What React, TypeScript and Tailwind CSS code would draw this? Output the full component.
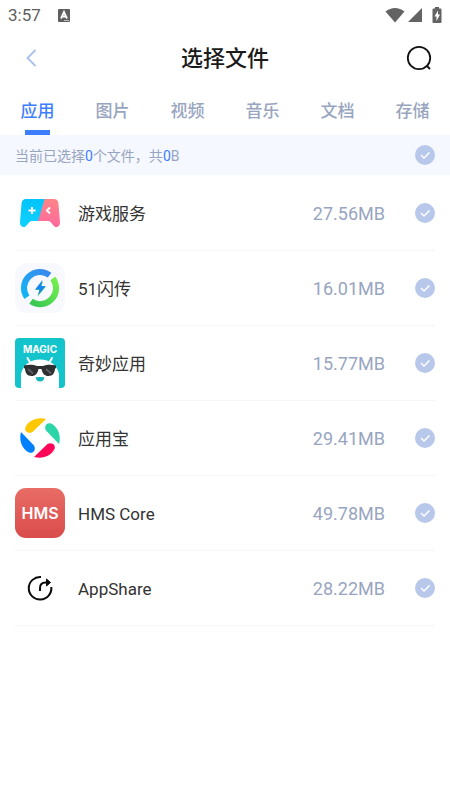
import { useState, type ReactNode } from 'react';

interface AppItem {
  id: string;
  name: string;
  size: string;
  icon: ReactNode;
}

const TABS = ['应用', '图片', '视频', '音乐', '文档', '存储'];

function GameIcon() {
  return (
    <svg viewBox="0 0 50 50" className="size-full" aria-hidden="true">
      <defs>
        <linearGradient id="padBlue" x1="0" y1="0" x2="0" y2="1">
          <stop offset="0" stopColor="#00c3fb" />
          <stop offset="1" stopColor="#12d2ff" />
        </linearGradient>
        <linearGradient id="padPink" x1="0" y1="0" x2="0" y2="1">
          <stop offset="0" stopColor="#ff8884" />
          <stop offset="1" stopColor="#ff66a0" />
        </linearGradient>
        <clipPath id="padShape">
          <path d="M11 11h28c2.400 0 4 1.600 4.400 4l1.600 19c.4 5-4 6.500-6.500 3.500L35.500 34c-.7-.7-1.500-1-2.500-1H17c-1 0-1.800.3-2.500 1l-3 3.500C9 40.500 4.600 39 5 34l1.600-19c.4-2.400 2-4 4.400-4z" />
        </clipPath>
      </defs>
      <g clipPath="url(#padShape)">
        <rect x="0" y="8" width="32" height="34" fill="url(#padBlue)" />
        <path d="M30.500 8H50v34H20.500z" fill="url(#padPink)" />
      </g>
      <path d="M17 19v7M13.500 22.500h7M35 19.500l-3 3 3 3" fill="none" stroke="#fff" strokeWidth="2" />
    </svg>
  );
}

function FlashIcon() {
  return (
    <svg viewBox="0 0 50 50" className="size-full" aria-hidden="true">
      <defs>
        <linearGradient id="ringBlue" x1="0" y1="1" x2="1" y2="0">
          <stop offset="0" stopColor="#12b5f5" />
          <stop offset="1" stopColor="#3c88ee" />
        </linearGradient>
        <linearGradient id="ringGreen" x1="1" y1="0" x2="0" y2="1">
          <stop offset="0" stopColor="#77f04e" />
          <stop offset="1" stopColor="#36c653" />
        </linearGradient>
      </defs>
      <rect width="50" height="50" rx="12" fill="#f7f9fe" />
      <path d="M11.900 34.200A16 16 0 0 1 34.600 12.200" fill="none" stroke="url(#ringBlue)" strokeWidth="6" />
      <path d="M37.800 15.400A16 16 0 0 1 16 38.300" fill="none" stroke="url(#ringGreen)" strokeWidth="6" />
      <path d="M28 18l-7.500 9h4l-2 6.500 8.500-10h-4.500z" fill="#46d850" />
      <path d="M27.500 17L20 26.500h4.500L23 32.500l7.500-9.500H26z" fill="#1685f5" />
    </svg>
  );
}

function MagicIcon() {
  return (
    <svg viewBox="0 0 50 50" className="size-full" aria-hidden="true">
      <rect width="50" height="50" rx="4" fill="#14c4cd" />
      <text x="25" y="15" textAnchor="middle" fontSize="10" fontWeight="700" fill="#fff" fontFamily="Inter, sans-serif">MAGIC</text>
      <path d="M12.500 20l4 7M37 20l-4 7" stroke="#fff" strokeWidth="2" strokeLinecap="round" />
      <path d="M6 50V36C8 27 15 21.500 25 21.500S42 27 44 36v14z" fill="#fff" />
      <path d="M9 27.500c5-1.200 9.500-.8 13 .5h6c3.500-1.300 8-1.700 13-.5v2.500l-1 .8c-.4 4.700-2.200 7.200-6.500 7.200-4 0-6-2.200-7-7h-3c-1 4.800-3 7-7 7-4.300 0-6.100-2.500-6.500-7.200L9 30z" fill="#2d2f31" />
      <path d="M13 31l5 4.500M31 31l5 4.500" stroke="#5a5e61" strokeWidth="2" />
      <path d="M20.500 39.500c1.500-.8 7.500-.8 9 0-.5 2.500-2.200 4-4.500 4s-4-1.500-4.500-4z" fill="#14b5bf" />
    </svg>
  );
}

function StoreIcon() {
  return (
    <svg viewBox="0 0 50 50" className="size-full" aria-hidden="true">
      <path d="M31 6C22 3.500 13.500 7.500 10.500 14c-1.500 4 2.500 7.500 7 5z" fill="#ffc700" />
      <path d="M44 31C46.500 22 42.500 13.500 36 10.500c-4-1.500-7.500 2.500-5 7z" fill="#2cd5a7" />
      <path d="M19 44C28 46.500 36.500 42.500 39.500 36c1.500-4-2.500-7.500-7-5z" fill="#ff0758" />
      <path d="M6 19C3.500 28 7.500 36.500 14 39.500c4 1.500 7.500-2.500 5-7z" fill="#0080ff" />
    </svg>
  );
}

function HmsIcon() {
  return (
    <svg viewBox="0 0 50 50" className="size-full" aria-hidden="true">
      <defs>
        <linearGradient id="hmsRed" x1="0" y1="0" x2="0" y2="1">
          <stop offset="0" stopColor="#e96c66" />
          <stop offset="1" stopColor="#d94c4b" />
        </linearGradient>
      </defs>
      <rect width="50" height="50" rx="11" fill="url(#hmsRed)" />
      <text x="25" y="31" textAnchor="middle" fontSize="16" fontWeight="600" fill="#fff" fontFamily="Inter, sans-serif">HMS</text>
    </svg>
  );
}

function ShareIcon() {
  return (
    <svg viewBox="0 0 50 50" className="size-full" fill="none" stroke="#0b0b0b" strokeWidth="2" aria-hidden="true">
      <path d="M26 14A11.300 11.300 0 1 0 36.300 24" />
      <path d="M25 28v-3c0-3.500 2-5.500 5.500-5.500H33" />
      <path d="M31.500 16l4 3.500-4 3.500z" fill="#0b0b0b" strokeWidth="1" />
    </svg>
  );
}

const APPS: AppItem[] = [
  { id: 'game', name: '游戏服务', size: '27.56MB', icon: <GameIcon /> },
  { id: 'flash', name: '51闪传', size: '16.01MB', icon: <FlashIcon /> },
  { id: 'magic', name: '奇妙应用', size: '15.77MB', icon: <MagicIcon /> },
  { id: 'store', name: '应用宝', size: '29.41MB', icon: <StoreIcon /> },
  { id: 'hms', name: 'HMS Core', size: '49.78MB', icon: <HmsIcon /> },
  { id: 'share', name: 'AppShare', size: '28.22MB', icon: <ShareIcon /> },
];

function StatusBar() {
  return (
    <div className="flex h-[30px] items-center px-2 text-[#5f5f5f]">
      <span className="text-[17px] leading-6">3:57</span>
      <svg viewBox="0 0 12 13" className="ml-[17px] h-[13px] w-3" aria-hidden="true">
        <rect width="12" height="13" rx="1" fill="#5f5f5f" />
        <path d="M3 9.500L6 3l3 6.500M4 7.500h4" fill="none" stroke="#fff" strokeWidth="1.800" />
        <path d="M6 11.500h5" stroke="#bbb" strokeWidth="1" />
      </svg>
      <svg viewBox="0 0 20 16" className="ml-auto h-4 w-5" fill="#636363" aria-hidden="true">
        <path d="M.5 4.500C6-.3 14-.3 19.500 4.500L10 15.500z" />
      </svg>
      <svg viewBox="0 0 14 14" className="ml-[3px] size-[14px]" fill="#636363" aria-hidden="true">
        <path d="M14 0v14H0z" />
      </svg>
      <svg viewBox="0 0 10 16" className="ml-[10px] h-4 w-[10px]" aria-hidden="true">
        <path d="M3 0h4v1.500h1.500q1 0 1 1V15q0 1-1 1h-7q-1 0-1-1V2.500q0-1 1-1H3z" fill="#636363" />
        <path d="M6 3.500L2.500 9.500h2V14L8 7.500H6z" fill="#fff" />
      </svg>
    </div>
  );
}

interface RoundCheckProps {
  label: string;
  checked: boolean;
  onChange: () => void;
}

function RoundCheck({ label, checked, onChange }: RoundCheckProps) {
  return (
    <span className="relative flex size-5 shrink-0">
      <input
        type="checkbox"
        aria-label={label}
        checked={checked}
        onChange={onChange}
        className="size-5 cursor-pointer appearance-none rounded-full bg-[#b8c8eb] checked:bg-[#3d7eff]"
      />
      <svg viewBox="0 0 20 20" className="pointer-events-none absolute inset-0" aria-hidden="true">
        <path d="M6 10l3 3 5.500-5.500" fill="none" stroke="#fff" strokeWidth="1.500" />
      </svg>
    </span>
  );
}

export default function App() {
  const [activeTab, setActiveTab] = useState('应用');
  const [selected, setSelected] = useState<string[]>([]);

  const allSelected = selected.length === APPS.length;
  const total = APPS.filter((a) => selected.includes(a.id)).reduce((sum, a) => sum + parseFloat(a.size), 0);

  const toggle = (id: string) => {
    setSelected((prev) => (prev.includes(id) ? prev.filter((x) => x !== id) : [...prev, id]));
  };

  return (
    <div className="min-h-screen bg-white font-[Roboto,'Noto_Sans_CJK_SC',sans-serif]">
      <StatusBar />

      <header className="flex h-[55px] items-center justify-between px-[18px]">
        <button type="button" aria-label="返回" className="flex size-[26px] items-center justify-center">
          <svg viewBox="0 0 26 26" className="size-[26px]" fill="none" stroke="#aabfee" strokeWidth="1.800" aria-hidden="true">
            <path d="M17.500 5L9.500 13l8 8" />
          </svg>
        </button>
        <h1 className="pt-0.5 text-[22px] leading-8 font-medium text-[#1b1b1b]">选择文件</h1>
        <button type="button" aria-label="搜索" className="flex size-[26px] items-center justify-center">
          <svg viewBox="0 0 26 26" className="size-[26px]" fill="none" stroke="#111" strokeWidth="1.800" aria-hidden="true">
            <circle cx="13" cy="13" r="11.200" />
            <path d="M20.500 20.500l3.500 3.500" />
          </svg>
        </button>
      </header>

      <div role="tablist" className="grid h-[50px] grid-cols-6">
        {TABS.map((tab) => (
          <button
            key={tab}
            type="button"
            role="tab"
            aria-selected={activeTab === tab}
            onClick={() => setActiveTab(tab)}
            className={`flex flex-col items-center justify-between pt-3.5 text-[17px] leading-6 font-medium ${
              activeTab === tab ? 'text-[#3d7eff]' : 'text-[#98a5c0]'
            }`}
          >
            {tab}
            <span className={`h-[5px] w-[25px] ${activeTab === tab ? 'bg-[#3d7eff]' : ''}`} />
          </button>
        ))}
      </div>

      <div className="flex h-10 items-center justify-between bg-[#f5f8fe] px-[15px]">
        <p className="pt-0.5 text-[14px] leading-5 text-[#98a5c0]">
          当前已选择<span className="text-[#3d7eff]">{selected.length}</span>个文件，共
          <span className="text-[#3d7eff]">{total ? total.toFixed(2) : 0}</span>
          {total ? 'MB' : 'B'}
        </p>
        <RoundCheck
          label="全选"
          checked={allSelected}
          onChange={() => setSelected(allSelected ? [] : APPS.map((a) => a.id))}
        />
      </div>

      <ul className="px-[15px] pt-px">
        {APPS.map((app) => (
          <li key={app.id} className="flex h-[75px] items-center border-b border-[#f5f6f9]">
            <div className="size-[50px] shrink-0">{app.icon}</div>
            <span className="ml-[13px] flex-1 truncate pt-0.5 text-[17px] leading-6 text-[#333]">{app.name}</span>
            <span className="mr-[30px] pt-0.5 text-[18px] leading-6 text-[#98a5c0]">{app.size}</span>
            <RoundCheck label={app.name} checked={selected.includes(app.id)} onChange={() => toggle(app.id)} />
          </li>
        ))}
      </ul>
    </div>
  );
}
